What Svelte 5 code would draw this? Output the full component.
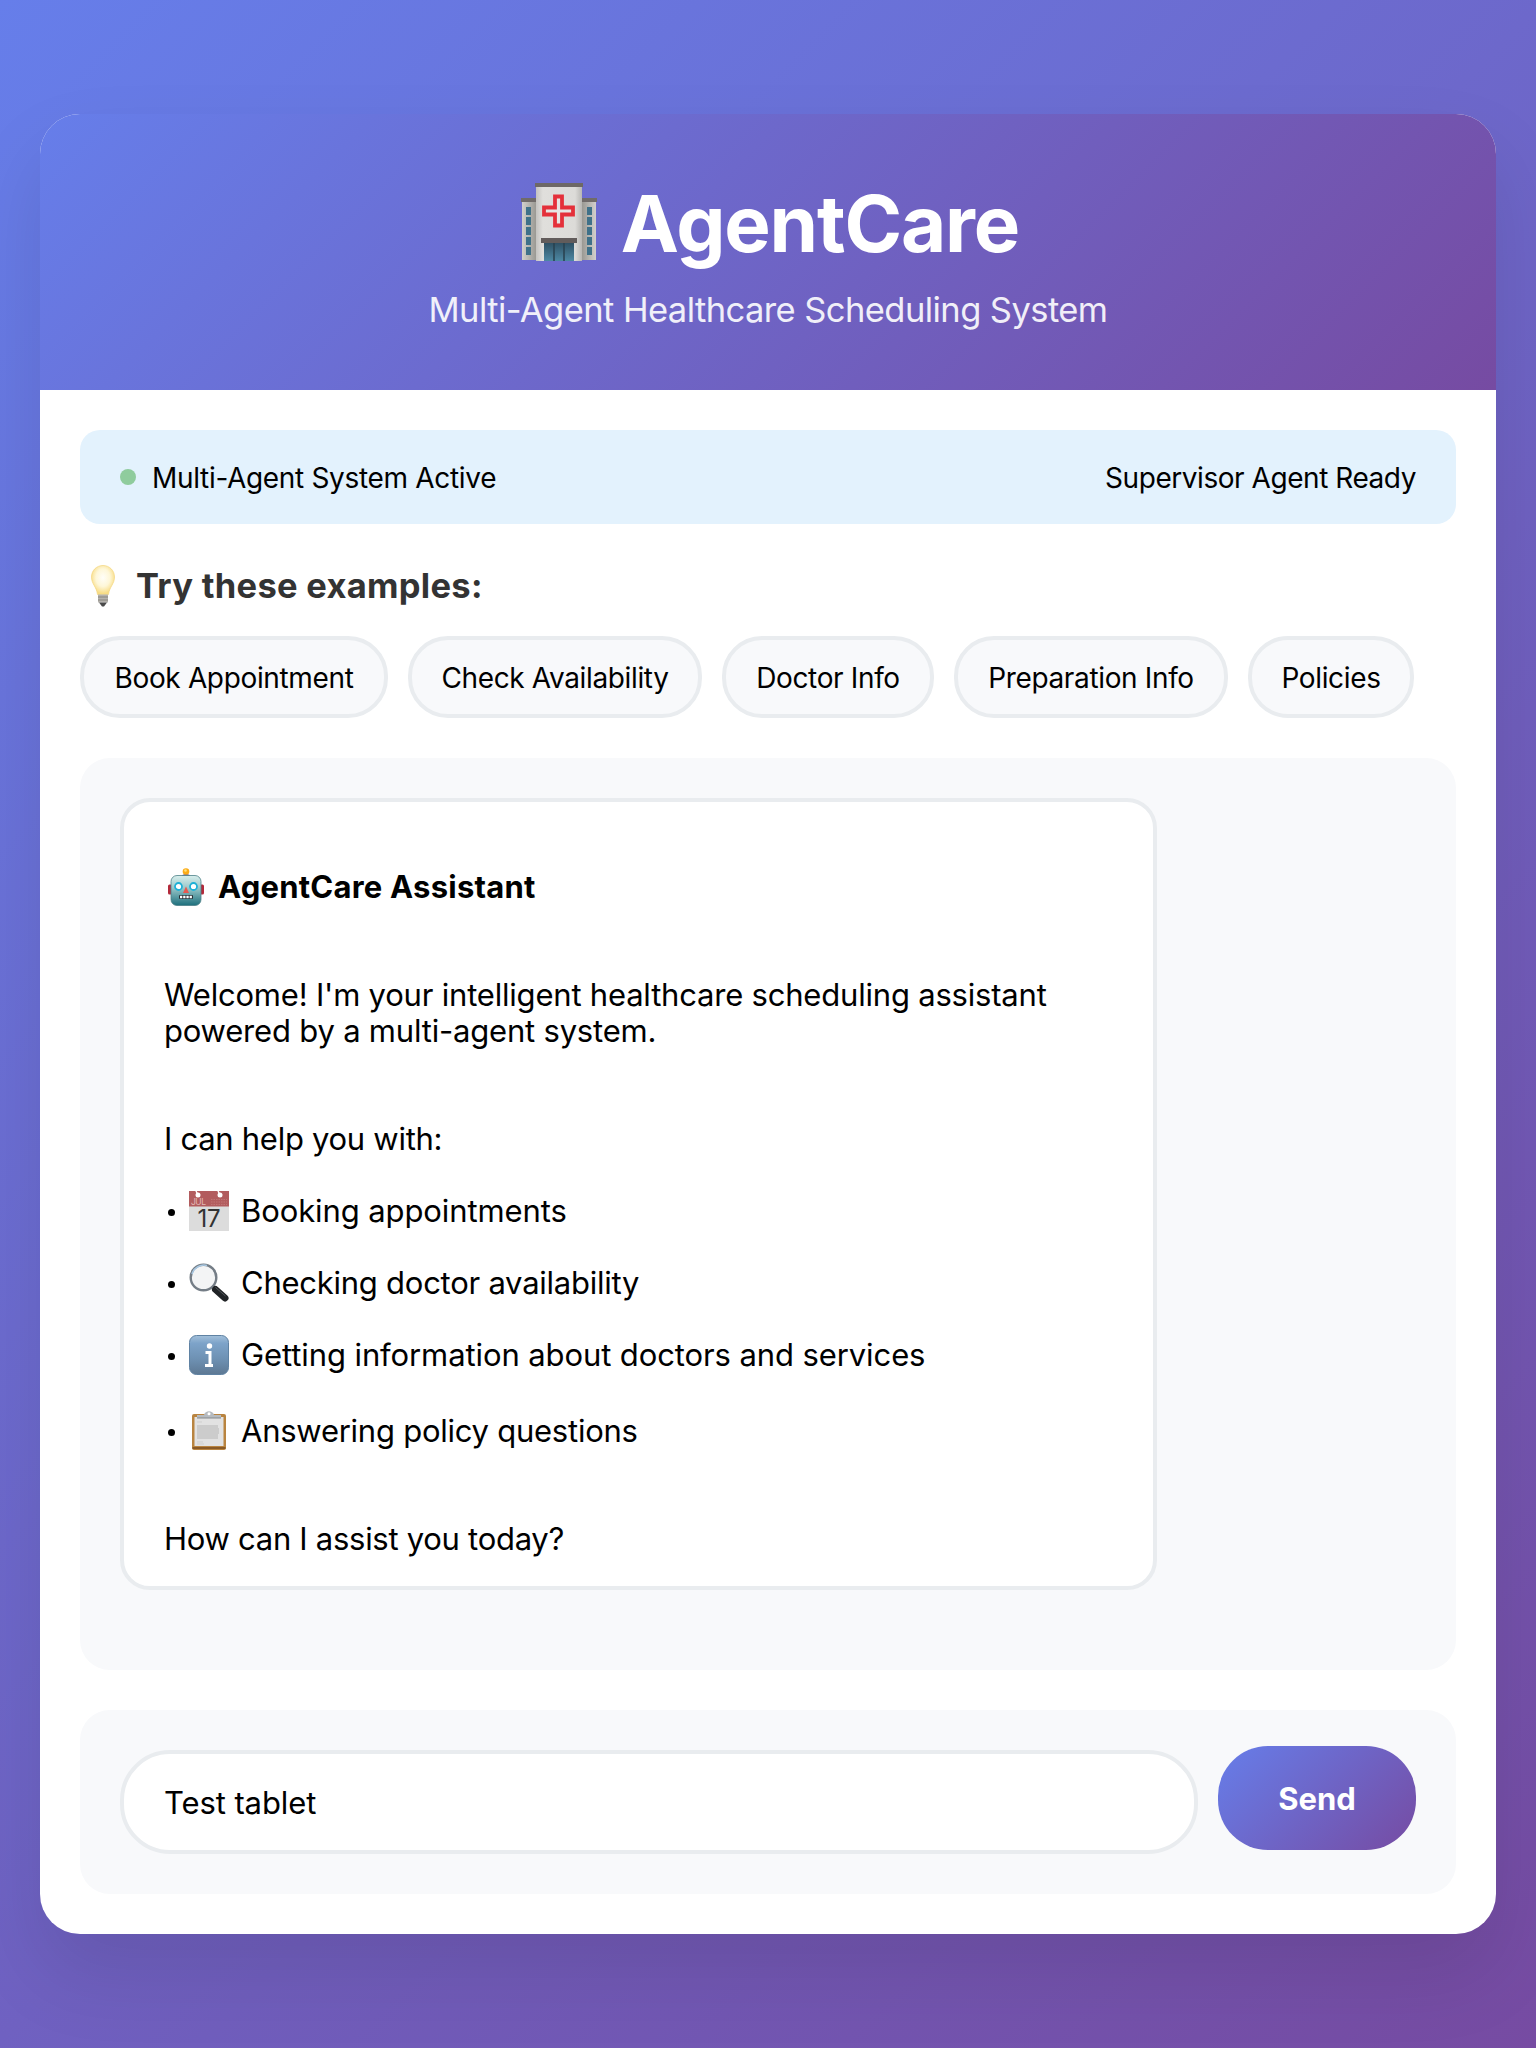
<script>
  const chips = [
    { label: 'Book Appointment', w: 308 },
    { label: 'Check Availability', w: 294 },
    { label: 'Doctor Info', w: 212 },
    { label: 'Preparation Info', w: 274 },
    { label: 'Policies', w: 166 }
  ];
  const items = [
    { icon: 'calendar', text: 'Booking appointments' },
    { icon: 'search', text: 'Checking doctor availability' },
    { icon: 'info', text: 'Getting information about doctors and services' },
    { icon: 'clipboard', text: 'Answering policy questions' }
  ];
  let message = $state('Test tablet');
</script>

<main>
  <div class="container">
    <header>
      <h1>
        <svg class="hospital" viewBox="0 0 76 80">
          <defs>
            <linearGradient id="wall" x1="0" x2="1"><stop offset="0" stop-color="#c4c3c0" /><stop offset=".15" stop-color="#e0dfdc" /><stop offset=".85" stop-color="#dcdbd8" /><stop offset="1" stop-color="#b8b7b4" /></linearGradient>
            <linearGradient id="wing" x1="0" x2="1"><stop offset="0" stop-color="#d2d0cc" /><stop offset="1" stop-color="#96958f" /></linearGradient>
            <linearGradient id="wing2" x1="1" x2="0"><stop offset="0" stop-color="#d2d0cc" /><stop offset="1" stop-color="#96958f" /></linearGradient>
            <linearGradient id="glass" x1="0" y1="0" x2="0" y2="1"><stop offset="0" stop-color="#2f5164" /><stop offset="1" stop-color="#4d88a3" /></linearGradient>
          </defs>
          <rect x="1" y="17" width="15" height="60" fill="url(#wing)" />
          <rect x="60" y="17" width="15" height="60" fill="url(#wing2)" />
          <rect x="0" y="15" width="15" height="4" fill="#706b69" />
          <rect x="61" y="15" width="15" height="4" fill="#706b69" />
          <g fill="#3f7189">
            {#each [24, 34, 44, 54, 64] as y}
              <rect x="5" {y} width="5" height="8" /><rect x="66" {y} width="5" height="8" />
            {/each}
          </g>
          <rect x="15" y="3" width="46" height="75" fill="url(#wall)" />
          <rect x="14" y="0" width="48" height="4" fill="#6d6866" />
          <path d="M34 13.500h7v11h11v7H41v11h-7v-11H23v-7h11z" fill="#e6e5e3" stroke="#e4303a" stroke-width="3.800" />
          <rect x="23" y="60" width="30" height="18" fill="url(#glass)" />
          <path d="M33 60v18M43 60v18" stroke="#29404e" stroke-width="1.500" />
          <rect x="20" y="55" width="36" height="5" fill="#625c5b" />
        </svg>
        <span>AgentCare</span>
      </h1>
      <p>Multi-Agent Healthcare Scheduling System</p>
    </header>

    <div class="content">
      <div class="status">
        <div class="left"><i class="dot"></i><span>Multi-Agent System Active</span></div>
        <span class="ready">Supervisor Agent Ready</span>
      </div>

      <h3>
        <svg class="bulb" viewBox="0 0 24 42">
          <defs><radialGradient id="glow" cx=".5" cy=".42" r=".55"><stop offset="0" stop-color="#fffef8" /><stop offset=".55" stop-color="#fef7d8" /><stop offset="1" stop-color="#f8dc84" /></radialGradient></defs>
          <path d="M12 .5C5.500.5.500 5.500.500 12c0 7 5 9.500 6 17.500h11c1-8 6-10.500 6-17.500C23.500 5.500 18.500.5 12 .5z" fill="url(#glow)" stroke="#f3d67c" stroke-width=".7" />
          <path d="M7 29.500h10v8H7z" fill="#b5b2ad" /><path d="M7 32h10M7 35h10" stroke="#88857f" />
          <path d="M8 37.500h8l-3 4h-2z" fill="#4a4a4a" />
        </svg>
        <span>Try these examples:</span>
      </h3>
      <div class="chips">
        {#each chips as chip}
          <button class="chip" style="width: {chip.w}px">{chip.label}</button>
        {/each}
      </div>

      <section class="chat">
        <article>
          <h4>
            <svg class="robot" viewBox="0 0 36 38">
              <defs><linearGradient id="metal" x1="0" y1="0" x2="0" y2="1"><stop offset="0" stop-color="#d9efed" /><stop offset=".4" stop-color="#9cc9cb" /><stop offset="1" stop-color="#1d6f7c" /></linearGradient></defs>
              <rect x="0" y="16.500" width="4" height="10" rx="1.500" fill="#b3293a" /><rect x="32" y="16.500" width="4" height="10" rx="1.500" fill="#b3293a" />
              <path d="M13.500 9c0-4 9-4 9 0z" fill="#5b4a8c" /><circle cx="18" cy="3.500" r="3.300" fill="#fbab18" /><circle cx="17.500" cy="2.500" r="1.300" fill="#ffe27a" />
              <rect x="3" y="7.500" width="30" height="30" rx="6" fill="url(#metal)" stroke="#4d8088" stroke-width=".8" />
              <circle cx="10.500" cy="18.500" r="3.500" fill="#fff" stroke="#1eb0d6" stroke-width="1.800" /><circle cx="25.500" cy="18.500" r="3.500" fill="#fff" stroke="#1eb0d6" stroke-width="1.800" />
              <path d="M18 18.500l3 6.500h-6z" fill="#e9574e" />
              <rect x="11" y="27" width="14" height="4" rx="1" fill="#273238" /><path d="M12 29h12" stroke="#fff" stroke-width="2.500" stroke-dasharray="2.300 .9" />
            </svg>
            <span>AgentCare Assistant</span>
          </h4>
          <p class="welcome">Welcome! I'm your intelligent healthcare scheduling assistant<br />powered by a multi-agent system.</p>
          <p class="help">I can help you with:</p>
          <ul>
            {#each items as item}
              <li class={item.icon}>
                <i class="bullet"></i>
                {#if item.icon === 'calendar'}
                  <svg viewBox="0 0 40 40">
                    <rect width="40" height="40" fill="#dcdcdc" /><rect width="40" height="15.500" fill="#b25c5e" />
                    <circle cx="9" cy="4" r="2.500" fill="#fff" /><circle cx="31" cy="4" r="2.500" fill="#fff" /><path d="M9 4L7 0M31 4l-2-4" stroke="#fff" stroke-width="1.500" />
                    <text x="2" y="14" font-size="8.500" fill="#e3b9b8" textLength="15">JUL</text>
                    <path d="M22 8.500h16M22 11h16M22 13.500h16" stroke="#c07475" stroke-width="1" stroke-dasharray="1.500 1" />
                    <text x="20" y="35.500" font-size="24" fill="#333" text-anchor="middle" textLength="23">17</text>
                  </svg>
                {:else if item.icon === 'search'}
                  <svg viewBox="0 0 40 40">
                    <path d="M22 21.500l5 5" stroke="#777" stroke-width="3" />
                    <circle cx="14.500" cy="14.500" r="12.800" fill="#f3f4f5" stroke="#747d86" stroke-width="2.400" /><path d="M3 11A12.500 12.500 0 0 1 18 2.500" fill="none" stroke="#a9c8e2" stroke-width="1.500" />
                    <path d="M26.500 26.500l9.500 8.500" stroke="#202326" stroke-width="7" stroke-linecap="round" /><path d="M26.500 24.500l10 8.500" stroke="#53585c" stroke-width="1" />
                  </svg>
                {:else if item.icon === 'info'}
                  <svg viewBox="0 0 40 40">
                    <defs><linearGradient id="blue" x1="0" y1="0" x2="0" y2="1"><stop offset="0" stop-color="#a3c0da" /><stop offset=".2" stop-color="#7da3c9" /><stop offset=".6" stop-color="#6e91b3" /><stop offset="1" stop-color="#5d7893" /></linearGradient></defs>
                    <rect x=".5" y=".5" width="39" height="39" rx="7" fill="url(#blue)" stroke="#5f82a3" />
                    <circle cx="20.500" cy="11" r="2.700" fill="#fff" /><path d="M16.500 17.500H21V30M16 30.500h8" stroke="#fff" stroke-width="3" fill="none" />
                  </svg>
                {:else}
                  <svg viewBox="0 0 40 40">
                    <rect x="3" y="3" width="34" height="36" rx="2" fill="#b98440" /><rect x="3.500" y="36" width="33" height="2" fill="#8a5a26" /><rect x="5.500" y="6" width="29" height="29" fill="#e2e2e2" />
                    <path d="M8 11h5M8 31h6M8 33h7" stroke="#cfcfcf" stroke-width="1" />
                    <path d="M8 14h21v3h1v6h-1v5H8z" fill="#cccccc" />
                    <path d="M8 7V4h7c1-5 9-5 10 0h7v3z" fill="#b6bbc0" /><path d="M8 7h24" stroke="#85898d" /><circle cx="20" cy="2.700" r="1.500" fill="#fff" />
                  </svg>
                {/if}
                <span>{item.text}</span>
              </li>
            {/each}
          </ul>
          <p class="ask">How can I assist you today?</p>
        </article>
      </section>

      <section class="composer">
        <input type="text" bind:value={message} />
        <button class="send">Send</button>
      </section>
    </div>
  </div>
</main>

<style>
  :global(body) { margin: 0; }
  main, main * { box-sizing: border-box; }
  main {
    min-height: 2048px;
    padding: 0 40px;
    display: flex;
    align-items: center;
    background: linear-gradient(135deg, #667eea 0%, #764ba2 100%);
    font-family: Inter, 'Liberation Sans', sans-serif;
    color: #000;
  }
  h1, h3, h4, p, ul { margin: 0; padding: 0; }
  svg { display: block; flex: none; overflow: visible; }
  .container {
    width: 100%;
    height: 1820px;
    background: #fff;
    border-radius: 40px;
    overflow: hidden;
    box-shadow: 0 40px 80px rgba(0, 0, 0, 0.1);
  }
  header {
    height: 276px;
    padding-top: 61px;
    display: flex;
    flex-direction: column;
    align-items: center;
    background: linear-gradient(135deg, #667eea 0%, #764ba2 100%);
    color: #fff;
  }
  h1 { display: flex; gap: 24px; height: 96px; padding-left: 4px; align-items: center; font-size: 78px; font-weight: 700; line-height: 96px; letter-spacing: -1.15px; white-space: nowrap; }
  h1 span { padding-top: 2px; }
  .hospital { width: 76px; height: 80px; }
  header p { margin-top: 17px; font-size: 34.5px; line-height: 44px; letter-spacing: -0.57px; opacity: 0.9; white-space: nowrap; }
  .content { padding: 40px; }
  .status {
    height: 94px;
    padding: 0 40px;
    display: flex;
    align-items: center;
    justify-content: space-between;
    background: #e3f2fd;
    border-radius: 20px;
    font-size: 28px;
    letter-spacing: -0.32px;
  }
  .status span { padding-top: 2px; }
  .ready { letter-spacing: -0.45px; }
  .left { display: flex; align-items: center; gap: 16px; }
  .dot { width: 16px; height: 16px; border-radius: 50%; background: #8fcc9d; }
  h3 { display: flex; align-items: center; height: 42px; margin-top: 41px; padding-left: 11px; gap: 21px; font-size: 34.5px; font-weight: 700; letter-spacing: 0.29px; color: #333; white-space: nowrap; }
  h3 span { padding-bottom: 2px; }
  .bulb { width: 24px; height: 42px; }
  .chips { display: flex; gap: 20px; margin-top: 29px; }
  .chip { height: 82px; padding: 2px 0 0; border: 4px solid #e9ecef; border-radius: 40px; background: #f8f9fb; font: 400 28px Inter, sans-serif; letter-spacing: -0.35px; color: #000; white-space: nowrap; }
  .chat { display: flex; height: 912px; margin-top: 40px; padding: 40px; background: #f8f9fb; border-radius: 30px; }
  article { width: 1037px; flex: none; height: 792px; padding: 67px 0 0 40px; background: #fff; border: 4px solid #e9ecef; border-radius: 30px; font-size: 31px; line-height: 36px; letter-spacing: -0.2px; white-space: nowrap; }
  h4 { display: flex; height: 36px; align-items: center; gap: 14px; padding-left: 4px; font-size: 31px; font-weight: 700; letter-spacing: 0.23px; }
  .robot { width: 36px; height: 38px; }
  .welcome { margin-top: 72px; }
  .help { margin-top: 72px; letter-spacing: -0.28px; }
  ul { list-style: none; margin-top: 36px; display: flex; flex-direction: column; gap: 36px; }
  li { display: flex; align-items: center; height: 36px; letter-spacing: -0.1px; }
  li:last-child { margin-top: 4px; }
  .search, .clipboard { letter-spacing: -0.25px; }
  li svg { width: 40px; height: 40px; margin: 0 12px 0 14px; letter-spacing: 0; }
  .bullet { width: 7px; height: 7px; margin: 2px 0 0 4px; border-radius: 50%; background: #000; }
  .ask { margin-top: 72px; letter-spacing: -0.28px; }
  .composer { display: flex; gap: 20px; height: 184px; margin-top: 40px; padding: 36px 40px; background: #f8f9fb; border-radius: 30px; }
  input { width: 1078px; height: 104px; margin-top: 4px; padding: 0 40px; border: 4px solid #e9ecef; border-radius: 50px; background: #fff; font: 400 31px Inter, sans-serif; letter-spacing: -0.1px; color: #000; outline: 0; }
  .send { flex: 1; height: 104px; border: 0; border-radius: 50px; background: linear-gradient(135deg, #667eea 0%, #764ba2 100%); font: 700 31px Inter, sans-serif; color: #fff; }
</style>
